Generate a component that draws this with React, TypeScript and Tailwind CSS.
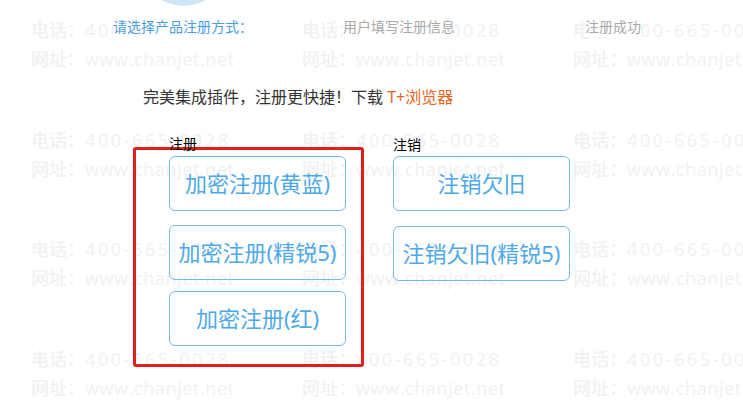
import React from 'react';

const marks = Array.from({ length: 12 });

function Watermark() {
    return (
        <div className="pointer-events-none absolute inset-0 grid grid-cols-[repeat(3,271px)] auto-rows-[109.5px] pl-[31px] pt-[16px] text-[18px] font-medium leading-[29px] text-[#f1f1f1] font-['Open_Sans','Noto_Sans_CJK_SC',sans-serif]">
            {marks.map((_, i) => (
                <div key={i} className="whitespace-nowrap">
                    <div>
                        电话：<span className="tracking-[2.6px]">400-665-0028</span>
                    </div>
                    <div>
                        网址：<span className="tracking-[0.6px]">www.chanjet.net</span>
                    </div>
                </div>
            ))}
        </div>
    );
}

function RegButton({ label, className = '' }: { label: string; className?: string }) {
    return (
        <button
            className={`flex h-[55px] w-[177px] items-center justify-center rounded-[6px] border border-[#73b9e8] text-[22px] text-[#4ea9e9] ${className}`}
        >
            {label}
        </button>
    );
}

export default function App() {
    return (
        <div className="relative h-[413px] w-[743px] overflow-hidden bg-white font-['Noto_Sans','Noto_Sans_CJK_SC',sans-serif]">
            <Watermark />

            <div className="relative">
                {/* step indicator: only the bottom of the circle shows */}
                <div className="ml-[141px] h-[6px] w-[85px] overflow-hidden">
                    <svg width="85" height="6" viewBox="0 79 85 6" className="block">
                        <circle cx="42.5" cy="42.5" r="42.5" fill="#cfe6f9" />
                    </svg>
                </div>

                <div className="mt-[11px] flex text-[14px] leading-[20px]">
                    <span className="ml-[113px] bg-white text-[#4a9de2]">请选择产品注册方式：</span>
                    <span className="ml-[90px] bg-white text-[#a8a8a8]">用户填写注册信息</span>
                    <span className="ml-[130px] bg-white text-[#a8a8a8]">注册成功</span>
                </div>

                <p className="ml-[143px] mt-[48px] text-[16px] leading-[24px] text-[#333333]">
                    完美集成插件，注册更快捷！下载 <span className="text-[#e8651e]">T+浏览器</span>
                </p>

                <div className="ml-[133px] mt-[38px] flex items-start">
                    {/* register */}
                    <div className="h-[220px] w-[231px] rounded-[3px] border-[3px] border-[#e21f1a] pl-[33px]">
                        <div className="-mt-[16px] text-[14px] leading-[20px] text-black">注册</div>
                        <RegButton label="加密注册(黄蓝)" className="mt-[2px]" />
                        <RegButton label="加密注册(精锐5)" className="mt-[14px]" />
                        <RegButton label="加密注册(红)" className="mt-[11px]" />
                    </div>

                    {/* cancel */}
                    <div className="-mt-[12px] ml-[29px]">
                        <div className="text-[14px] leading-[20px] text-black">注销</div>
                        <RegButton label="注销欠旧" className="mt-[1px] w-[176px]" />
                        <RegButton label="注销欠旧(精锐5)" className="mt-[15px] w-[176px]" />
                    </div>
                </div>
            </div>
        </div>
    );
}
